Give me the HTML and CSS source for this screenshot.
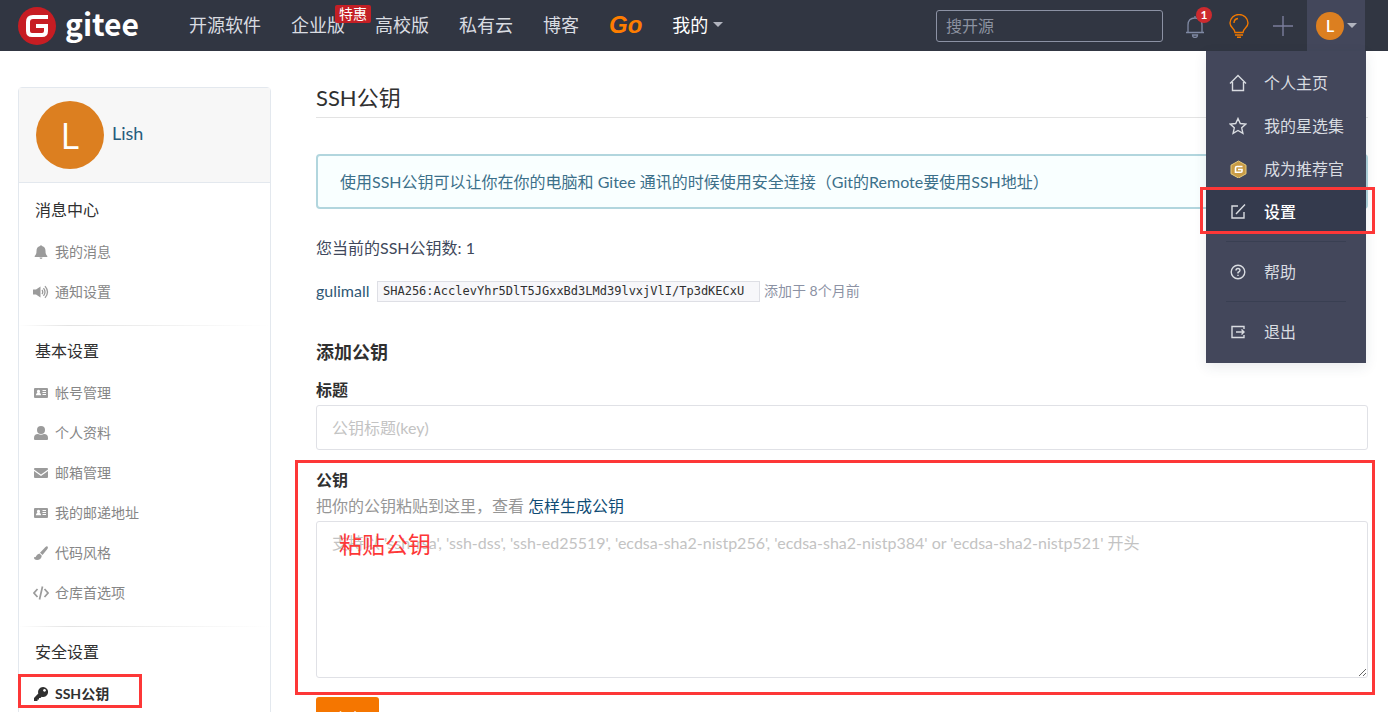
FILE: index.html
```html
<!DOCTYPE html>
<html lang="zh-CN">
<head>
<meta charset="utf-8">
<meta name="viewport" content="width=device-width, initial-scale=1">
<title>SSH公钥 - Gitee</title>
<link rel="stylesheet" href="styles.css">
</head>
<body>
<svg class="defs" aria-hidden="true">
  <symbol id="i-card" viewBox="0 0 14 12"><path fill-rule="evenodd" d="M1 1h12a1 1 0 0 1 1 1v8a1 1 0 0 1-1 1H1a1 1 0 0 1-1-1V2a1 1 0 0 1 1-1zm3.500 1.800a1.700 1.700 0 0 0-1 3C2.400 6.200 2 7 2 8.300h5C7 7 6.600 6.200 5.500 5.800a1.700 1.700 0 0 0-1-3zM8.500 3v1H12V3zm0 2v1H12V5zm0 2v1H12V7z"/></symbol>
</svg>

<header class="topbar">
  <a class="logo" href="#">
    <svg class="logo-mark" viewBox="0 0 38 38" aria-hidden="true"><circle cx="19" cy="19" r="19" fill="#c71d23"/><path d="M30 10H15q-5 0-5 5v9q0 4 4 4h10q4 0 4-4v-5H18" fill="none" stroke="#fff" stroke-width="4"/></svg>
    <span>gitee</span>
  </a>
  <nav class="nav">
    <a href="#">开源软件</a>
    <a href="#" class="promo">企业版<span class="promo-tag">特惠</span></a>
    <a href="#">高校版</a>
    <a href="#">私有云</a>
    <a href="#">博客</a>
    <a href="#" class="go">Go</a>
    <a href="#" class="mine">我的<span class="caret"></span></a>
  </nav>
  <input class="search" type="text" placeholder="搜开源" aria-label="搜开源">
  <div class="tools">
    <button class="tool" aria-label="通知">
      <svg width="20" height="24" viewBox="0 0 20 24" fill="none" stroke="#7f89a3" stroke-width="1.300"><path d="M1 18.500h18M3 18v-7q0-7 7-7t7 7v7M10 4V2M7.500 21a2.500 2.500 0 0 0 5 0z"/></svg>
      <span class="count">1</span>
    </button>
    <button class="tool" aria-label="提示">
      <svg width="20" height="24" viewBox="0 0 20 24" fill="none" stroke="#f07800" stroke-width="1.400"><path d="M6 18.500c0-4-5-4.500-5-9.500a9 8.500 0 0 1 18 0c0 5-5 5.500-5 9.500zM6 21h8M8 23.300h4M5 9q0-4 4-4.500"/></svg>
    </button>
    <button class="tool" aria-label="新建">
      <svg width="20" height="20" viewBox="0 0 20 20" stroke="#7b7d9c" stroke-width="1.400"><path d="M10 0v20M0 10h20"/></svg>
    </button>
  </div>
  <div class="account">
    <button class="account-toggle" aria-label="Lish"><span class="avatar avatar-small">L</span><span class="caret"></span></button>
    <div class="menu">
      <a href="#"><svg viewBox="0 0 18 18"><path d="M1 9.500 9 1.500l8 8M3.500 8v8.500h11V8"/></svg>个人主页</a>
      <a href="#"><svg viewBox="0 0 18 18"><path d="m9 1.500 2.300 5 5.500.600-4.100 3.700 1.200 5.500L9 13.500l-4.900 2.800 1.200-5.500L1.200 7.100l5.500-.600z"/></svg>我的星选集</a>
      <a href="#"><svg viewBox="0 0 18 18"><path d="m9.500 1 7.500 4.200v8.600L9.500 18 2 13.800V5.200z" fill="#c89b45" stroke="#e8cc7d" stroke-width="1"/><path d="M13.500 6.500H8q-1.500 0-1.500 1.500v4.200h5.500q1 0 1-1V9.500H9" stroke="#fff" stroke-width="1.600"/></svg>成为推荐官</a>
      <a href="#" class="current"><svg viewBox="0 0 18 18"><path d="M9 3H3v12h12V9M7 11l9-9.500"/></svg>设置<span class="mark"></span></a>
      <hr>
      <a href="#"><svg viewBox="0 0 18 18"><circle cx="9" cy="9" r="6.800"/><path d="M7 7.500Q7 5.500 9 5.500t2 1.800Q11 8.500 9 9.500v1M9 11.700v1.300"/></svg>帮助</a>
      <hr>
      <a href="#"><svg viewBox="0 0 18 18"><path d="M15 6V3.500H3v11h12V12M7 9h8M12.500 6.500 15 9l-2.500 2.500"/></svg>退出</a>
    </div>
  </div>
</header>

<div class="page">
  <aside class="sidebar">
    <div class="profile"><span class="avatar">L</span><a href="#">Lish</a></div>
    <section>
      <h2>消息中心</h2>
      <a href="#"><svg viewBox="0 0 14 14"><path d="M7 0l1 1c2.500.500 3.500 2.500 3.500 5 0 3 .5 3.500 1.800 5v1H.7v-1C2 9.500 2.500 9 2.500 6c0-2.500 1-4.500 3.500-5zM5.500 12.500h3a1.500 1.500 0 0 1-3 0z"/></svg>我的消息</a>
      <a href="#"><svg class="wide" viewBox="0 0 16 14"><path d="M0 4.500h3L7.500 1.500v11L3 9.500H0z"/><path d="M9 5q1.500 2 0 4M10.500 3.200q3 3.800 0 7.600M12 1.200q5 5.800 0 11.600" fill="none" stroke="#9b9b9b" stroke-width="1.300"/></svg>通知设置</a>
    </section>
    <section>
      <h2>基本设置</h2>
      <a href="#"><svg><use href="#i-card"/></svg>帐号管理</a>
      <a href="#"><svg viewBox="0 0 14 14"><circle cx="7" cy="4" r="4"/><path d="M0 13v-1q0-4 4-4 3 1.500 6 0 4 0 4 4v1q0 1-1 1H1q-1 0-1-1z"/></svg>个人资料</a>
      <a href="#"><svg viewBox="0 0 14 14"><path d="M0 3q0-1 1-1h12q1 0 1 1v.500L7 8.500 0 3.500zM0 5l7 5 7-5v6q0 1-1 1H1q-1 0-1-1z"/></svg>邮箱管理</a>
      <a href="#"><svg><use href="#i-card"/></svg>我的邮递地址</a>
      <a href="#"><svg viewBox="0 0 14 14"><path d="M13.500.500q1 1-.500 3L8.500 9 6 6.800 11 1.500Q12.800-.300 13.500.500zM5.500 7.500 7.800 9.700Q7 14 3 14-.500 13.500 0 11q1.500 1 2.200-1 .8-2 3.300-2.500z"/></svg>代码风格</a>
      <a href="#"><svg class="wide" viewBox="0 0 16 14"><path d="M4.500 3 1 7l3.500 4M11.500 3 15 7l-3.500 4M9.500.500l-3 13" fill="none" stroke="#9b9b9b" stroke-width="1.700"/></svg>仓库首选项</a>
    </section>
    <section>
      <h2>安全设置</h2>
      <a href="#" class="current"><svg viewBox="0 0 14 14"><path fill-rule="evenodd" d="M9 0a5 5 0 1 1-1.300 9.800L6.500 11H5v1.500H3.500V14H0v-3l4.300-4.500A5 5 0 0 1 9 0zm1.500 2a1.400 1.400 0 1 0 .01 0z"/></svg>SSH公钥<span class="mark"></span></a>
    </section>
  </aside>

  <main class="content">
    <h1>SSH公钥</h1>
    <p class="notice">使用SSH公钥可以让你在你的电脑和 Gitee 通讯的时候使用安全连接（Git的Remote要使用SSH地址）</p>
    <p class="total">您当前的SSH公钥数: 1</p>
    <div class="key"><a href="#">gulimall</a><code>SHA256:AcclevYhr5DlT5JGxxBd3LMd39lvxjVlI/Tp3dKECxU</code><span>添加于 8个月前</span></div>
    <form class="form">
      <h3>添加公钥</h3>
      <div class="field">
        <label for="key-title">标题</label>
        <input id="key-title" type="text" placeholder="公钥标题(key)">
      </div>
      <div class="field">
        <label for="key-body">公钥</label>
        <p class="help">把你的公钥粘贴到这里，查看 <a href="#">怎样生成公钥</a></p>
        <textarea id="key-body" placeholder="支持以 'ssh-rsa', 'ssh-dss', 'ssh-ed25519', 'ecdsa-sha2-nistp256', 'ecdsa-sha2-nistp384' or 'ecdsa-sha2-nistp521' 开头"></textarea>
        <span class="mark"></span>
        <span class="mark-text">粘贴公钥</span>
      </div>
      <button class="submit" type="submit">确定</button>
    </form>
  </main>
</div>
</body>
</html>
```

FILE: styles.css
```css
* { box-sizing: border-box; }

body {
  margin: 0;
  height: 100vh;
  overflow: hidden;
  display: flex;
  flex-direction: column;
  background: #fff;
  color: #40485b;
  font: 16px/24px Lato, "Noto Sans CJK SC", sans-serif;
}

a { color: inherit; text-decoration: none; }
h1, h2, h3, p { margin: 0; }
button { border: 0; padding: 0; background: none; font: inherit; color: inherit; }
input, textarea { font: inherit; color: inherit; }
.defs { display: none; }

/* Top bar */
.topbar {
  flex: none;
  display: flex;
  align-items: center;
  height: 51px;
  padding: 0 23px 0 18px;
  background: #313642;
  color: #d9dce1;
}
.logo { display: flex; align-items: center; gap: 9px; width: 171px; }
.logo-mark { width: 38px; height: 38px; }
.logo span {
  color: #fff;
  font: bold 30px/40px "Noto Sans CJK SC", sans-serif;
  padding-bottom: 6px;
}
.nav { display: flex; align-items: center; gap: 30px; padding-bottom: 2px; font-size: 18px; white-space: nowrap; }
.promo { position: relative; }
.promo-tag {
  position: absolute;
  left: 44px;
  top: -8px;
  padding: 0 4px;
  border-radius: 2px;
  background: #c41f25;
  color: #fff;
  font-size: 14px;
  line-height: 18px;
}
.go { color: #fe7d00; font: italic bold 24px/24px "Liberation Sans", sans-serif; }
.mine { display: flex; align-items: center; gap: 5px; color: #fff; }
.caret { border: 5px solid transparent; border-top-color: #b1b4be; border-bottom: 0; }
.search {
  width: 227px;
  height: 32px;
  margin-left: auto;
  padding: 0 9px;
  border: 1px solid #8c92a4;
  border-radius: 3px;
  background: transparent;
}
.search::placeholder { color: #8c92a0; opacity: 1; }
.tools { display: flex; align-items: center; gap: 24px; margin: 0 14px 0 22px; }
.tool { position: relative; display: flex; }
.count {
  position: absolute;
  left: 11px;
  top: -7px;
  width: 16px;
  border-radius: 8px;
  background: #cd2a2e;
  color: #fff;
  font-size: 12px;
  font-weight: bold;
  line-height: 16px;
}
.account { position: relative; align-self: stretch; background: #43475b; }
.account-toggle { display: flex; align-items: center; gap: 3px; height: 100%; padding: 0 8px 0 9px; }
.avatar {
  display: flex;
  align-items: center;
  justify-content: center;
  width: 68px;
  height: 68px;
  border-radius: 50%;
  background: #dc7f20;
  color: #fff;
  font: 36px "Open Sans", sans-serif;
}
.avatar-small { width: 28px; height: 28px; font-size: 16px; font-weight: 600; }

/* Account menu */
.menu {
  position: absolute;
  z-index: 2;
  top: 100%;
  right: -1px;
  width: 160px;
  padding: 10px 0;
  background: #43475b;
  box-shadow: 0 4px 12px rgba(40, 60, 80, 0.1);
}
.menu a { position: relative; display: flex; align-items: center; gap: 17px; height: 43px; padding-left: 23px; }
.menu svg { width: 18px; height: 18px; fill: none; stroke: #d9dce1; stroke-width: 1.4; }
.menu .current { background: #343a4d; color: #fff; font-weight: 500; }
.menu hr { height: 1px; margin: 8px 20px; border: 0; background: #393f52; }

/* Red highlights */
.mark { position: absolute; border: 3px solid #fd3737; pointer-events: none; }
.menu .mark { inset: -3px -9px -1px -6px; }
.sidebar .mark { left: -1px; top: 0; width: 124px; height: 34px; }
.field .mark { inset: -8px -7px -17px -21px; }
.mark-text { position: absolute; left: 23px; top: 62px; color: #fd3737; font-size: 23px; line-height: 28px; }

/* Page */
.page { flex: 1; display: flex; gap: 45px; min-height: 0; padding: 36px 20px 0 18px; }

.sidebar { flex: none; width: 253px; height: max-content; padding-bottom: 40px; border: 1px solid #e3e8ee; border-radius: 4px; }
.profile {
  display: flex;
  align-items: center;
  gap: 8px;
  height: 95px;
  padding-left: 17px;
  border-bottom: 1px solid #e3e8ee;
  background: #f7f7f7;
  color: #255b7c;
  font-size: 18px;
}
.profile a { padding-bottom: 4px; }
.sidebar section { padding: 15px 0 13px; }
.sidebar section + section {
  padding-top: 13px;
  border-top: 1px solid;
  border-image: linear-gradient(to right, #fff, #e4e4e4 20%, #fff) 1;
}
.sidebar h2 { margin: 0 0 10px 16px; color: #303030; font-size: 16px; font-weight: 400; line-height: 24px; }
.sidebar section a { position: relative; display: flex; align-items: center; gap: 7px; height: 40px; padding-left: 15px; color: #868686; font-size: 14px; }
.sidebar section svg { width: 14px; height: 14px; fill: #9b9b9b; }
.sidebar section .wide { width: 16px; margin: 0 -1px; }
.sidebar section .current { color: #303030; font-weight: 700; }
.sidebar .current svg { fill: #303030; }

.content { flex: 1; min-width: 0; }
.content h1 { padding-bottom: 8px; border-bottom: 1px solid #e3e3e3; color: #303030; font-size: 22px; font-weight: 400; line-height: 22px; }
.notice { margin-top: 36px; padding: 14px 22px; border: 2px solid #b2d6de; border-radius: 4px; background: #f9ffff; color: #3c708a; line-height: 23px; }
.total { margin-top: 27px; }
.key { display: flex; align-items: center; margin-top: 19px; }
.key a { width: 61px; color: #2f5875; }
.key code { min-width: 383px; padding: 0 5px; border: 1px solid #dedfe5; background: #f7f7fa; color: #303030; font: 12px/19px "DejaVu Sans Mono", monospace; }
.key span { margin-left: 4px; color: #8c92a4; font-size: 14px; }
.form { margin-top: 37px; }
.form h3 { color: #303030; font-size: 18px; font-weight: 600; }
.field { position: relative; margin-top: 14px; }
.field + .field { margin-top: 18px; }
.field label { display: block; color: #303030; font-weight: 600; }
.field input, .field textarea { display: block; width: 100%; padding: 9px 15px; border: 1px solid #e0e1e6; border-radius: 3px; background: #fff; }
.field input { height: 45px; margin-top: 3px; }
.field textarea { height: 157px; margin-top: 3px; resize: vertical; }
.field ::placeholder { color: #c3c3c3; opacity: 1; }
.help { margin-top: 2px; color: #969696; }
.help a { color: #0f4c75; }
.submit { margin-top: 19px; padding: 10px 15px; border-radius: 3px; background: #f57600; color: #fff; min-width: 63px; }
```
